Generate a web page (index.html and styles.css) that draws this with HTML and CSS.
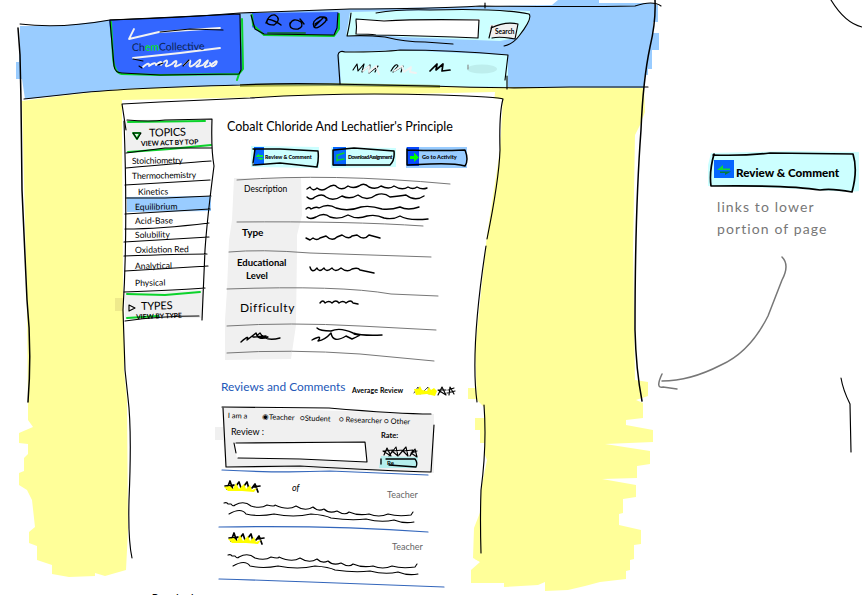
FILE: index.html
```html
<!DOCTYPE html>
<html lang="en">
<head>
<meta charset="utf-8">
<title>ChemCollective</title>
<link rel="stylesheet" href="styles.css">
</head>
<body>
<div class="sketch">
<svg class="ink" viewBox="0 0 862 595" aria-hidden="true">
  <!-- marker fills -->
  <path class="yellow" d="M22 101L60 96L120 89L250 85L644 87L645 112L640 125L635 135L633 250L635 380L648 382V396L636 400L643 403V418L626 420V425L653 430V442L605 444L650 451V464L637 466V478L602 479L636 485V497L623 499V513L619 514V525L641 530V544L634 545V559L630 560V570L626 571V579L600 582L585 586L568 590L545 591V582L538 585L504 587V583L471 583V570L480 562L473 558V540L476 510L480 494L487 460L480 443V430L475 428V418L477 402L468 399V388L472 386V370L475 350L495 92L122 100L124 310V370L127 400L128 530L126 570L119 572L105 576L95 573V576L69 577L52 574V565L37 560V546L29 543V532L35 527L32 500L27 490L19 485V473L24 471V458L28 454V444L19 443V433L33 427L28 420V408L27 300Z"/>
  <path class="sky" d="M20 26L60 26L110 20L240 13L345 9L500 6L552 5L558 0H599V3H655V5H658V22H653V33H659V50H652V69H648V75H645L644 88L500 87L250 85L120 89L25 99L22 79H16V62H19Z"/>
  <path class="paper" d="M122 104L160 101L240 98L340 94L440 95L503 99L500 150L487 235L475 350L477 400L484 407L485 440L481 490L481 553L471 562V595H132L128 398L123 300Z"/>
  <path class="paper" d="M503 100L507 101L506 140L502 175L500 150Z"/>
  <path class="yellow" d="M503 99L520 99V200H494L500 150ZM468 388H476L477 399H468ZM475 418H485V430H475ZM480 430H485V443H480ZM474 528L481 510V562L473 558Z"/>
  <path class="royal" d="M109 20H117L240 14L243 70L238 75L150 75L119 73L114 65Z"/>
  <path class="royal" d="M252 13L338 12L338 29L333 35L262 34L252 27Z"/>
  <path class="cyan" d="M350 12L480 9L530 11L530 20L519 37L500 41L400 37L346 36Z"/>
  <path class="sky" d="M347 37L380 35L410 38L480 41L480 45L347 44Z"/>
  <path class="cyan" d="M339 52L400 50L508 55V87L341 84Z"/>
  <path class="paper" d="M356 20L480 19L478 38L356 34Z"/>
  <path class="grey" d="M490 25L518 23L517 38L489 37Z"/>
  <path class="grey" d="M126 120L212 119V148L126 152Z"/>
  <path class="grey" d="M125 293L203 290V318L125 319Z"/>
  <path fill="#eeea8c" d="M115 298H123V311H115Z"/>
  <path class="sky" d="M127 197L211 196V211L127 212Z"/>
  <path class="grey" d="M234 178H301L302 215L297 235V250L296 325L291 359L225 360V320L227 290L229 240L232 220Z"/>
  <path class="grey" d="M223 407L434 414V473L226 467L223 440H215V427H223Z"/>
  <path class="paper" d="M234 443L365 443L367 462L237 458Z"/>
  <path fill="#b5efed" d="M381 456L418 457L417 468H379Z"/>
  <path class="cyan" d="M251 146L319 147V168L251 167ZM331 147L396 148V167L331 168Z"/>
  <path fill="#99ccff" d="M406 147H467V168H406Z"/>
  <path class="cyan" d="M711 153L790 151L859 152V191L851 192L779 188L708 186V165Z"/>
  <path fill="#0666ff" d="M254 147H264V165H254ZM333 147H346V166H333Z"/>
  <path fill="#0849ff" d="M407 147H419V166H407Z"/>
  <path fill="#0666ff" d="M714 160H734V178H714Z"/>
  <ellipse cx="482" cy="69" rx="15" ry="4.5" fill="#bdeeed"/>
  <path fill="#737a0a" opacity=".6" d="M240 84L330 83L440 85L440 88L330 86L240 87Z"/>

  <!-- green accents -->
  <g class="green">
    <path d="M111 22L113 57Q114 73 122 74L160 75L239 74L243 69L242 19M239 74L237 80"/>
    <path d="M252 15L253 25L264 35L334 36L339 29L339 14"/>
    <path d="M128 122L205 121M128 152L170 149L211 145M127 294L165 295L200 292M127 318L158 316"/>
    <path d="M268 33L305 33" stroke="#186b51"/>
    <path d="M133 133L140 133L137 139Z"/>
    <path d="M338 155L344 153M338 160L344 159M337 155V161" stroke-width="1.4"/>
  </g>
  <path fill="#0f0" d="M410 156H414V152.500L419 157.500L414 162V159H410Z"/>
  <path fill="#0be63b" d="M256 156L259 153.500V155H263V157H256ZM257 158H264L261 160Z"/>
  <path fill="#12d936" d="M717 170L723 165V168.500H730V170Z"/>
  <path fill="#077b3c" d="M720 171.500H731L725 175V173H720Z"/>

  <!-- outlines -->
  <g class="pen">
    <path d="M20 24Q60 29 110 20Q180 18 240 13Q300 11 350 9Q430 9 480 6Q580 7 635 6Q653 0 661 6M485 3V8"/>
    <path d="M18 28L20 55L21 101L22 190L27 300Q32 350 28 402" stroke-width="1.5"/>
    <path d="M655 0Q656 22 650 47Q643 80 641 130Q635 210 635 330Q636 370 642 401" stroke-width="1.5"/>
    <path d="M24 99L70 94Q120 88 240 85Q280 83 330 84L430 86Q500 89 570 87L648 87"/>
    <path d="M126 130L122 104L160 102L250 98Q340 92 440 95Q500 97 503 99Q499 113 500 150Q499 180 487 239M486 246Q470 350 477 402M484 405Q487 445 481 490Q480 520 481 553"/>
    <path d="M124 121Q128 230 123 310L125 370L128 398Q132 430 129 500Q128 540 132 558"/>
    <path d="M110 21L114 66Q115 73 122 73L160 75L239 74L241 70L240 14L110 20"/>
    <path d="M251 15L255 29L264 34L334 35L337 28L338 13M376 13Q400 9 430 10Q500 8 529 14Q533 18 519 36Q513 44 504 46M351 13Q350 23 347 36Q366 35 385 37Q405 42 425 42L453 44"/>
    <path d="M356 20Q357 27 356 34Q370 34 376 35Q430 36 478 38L479 20Q418 19 384 21L356 19"/>
    <path d="M492 26L489 38M491 28Q506 21 518 24L515 39Q500 36 492 38"/>
    <path d="M340 84L338 55Q339 50 345 52Q385 52 400 50Q450 50 508 55L505 80M507 76V89"/>
    <path d="M127 120Q150 122 165 120L212 119Q211 150 214 166Q207 220 205 250L202 320M126 153L165 148L212 148M126 168Q180 163 211 161M125 185L210 180M126 198L165 198L211 196M125 214L210 209M125 229Q160 229 209 223M124 242L209 237M124 256Q180 254 207 254M125 271L208 266M124 292Q180 290 205 288M124 303M125 321Q160 316 199 316"/>
    <path d="M133 133L141 133L137 139ZM129 305V311L135 308Z"/>
    <path d="M255 149L253 163M253 149L280 149L318 151Q319 159 317 167L280 163L253 165M333 150L333 165L390 165Q395 160 394 151L354 148L334 150M407 149V165L430 164Q454 163 465 166Q469 160 465 150Q440 151 407 150" stroke-width="1.5"/>
    <path d="M713 155Q744 156 770 153L853 154Q858 170 852 192Q831 188 820 190Q790 185 711 186Q709 172 714 154" stroke-width="1.7"/>
    <path d="M222 407L329 408Q400 414 431 414M223 408L226 467L300 466Q390 471 431 472L434 425M234 443L236 453M236 443L365 442L367 462L300 459L238 458"/>
    <path d="M381 459V464M386 459L415 459Q418 463 416 467L389 465" stroke-width="1.3"/>
    <path d="M831 0Q845 23 862 27M841 378Q843 390 850 404L851 452"/>
  </g>
  <g class="rule">
    <path d="M237 180Q330 173 450 184M237 222Q350 221 423 226M229 252Q260 249 310 253L431 257M227 289Q340 285 391 294L438 296M227 326Q290 322 360 326L436 330M227 353Q290 349 360 354L434 361"/>
    <path d="M782 257Q790 265 782 280Q773 303 768 316Q750 352 721 365Q690 381 662 381M662 374Q655 389 663 387L677 389" stroke-width="1.5"/>
  </g>
  <path class="blue" d="M222 470Q280 473 330 471L428 475M219 527Q330 525 428 532M219 579Q260 580 310 582L444 587"/>

  <!-- masthead squiggles -->
  <g class="chalk">
    <path d="M134 29L129 39L159 32L220 28M133 58L180 53L220 48"/>
    <path d="M143 67Q150 61 149 66Q156 61 156 65Q163 59 161 65Q168 57 167 63Q163 69 172 64Q178 58 176 64Q172 69 181 64M184 65Q192 57 190 63Q188 70 196 63Q203 56 199 64Q192 69 203 65Q210 57 207 63Q201 70 211 65Q219 58 216 64Q211 69 210 63"/>
  </g>
  <g class="pen">
    <path d="M160 32L190 29L223 30M133 59L143 61M139 66L142 68M158 65L163 63M183 66L189 60"/>
    <path d="M266 23Q269 14 275 15Q282 19 274 25Q264 25 268 19Q276 21 281 25M290 24Q293 17 301 22Q304 27 298 29Q289 30 290 23M300 19L304 24M314 27Q311 21 320 17Q330 16 325 22Q317 30 314 27L324 17L327 20M315 24L321 20" stroke-width="1.4"/>
    <path d="M353 70L357 64L358 71L364 64L362 72L370 65L369 73L378 66L375 72M391 71Q396 62 398 66L393 72L403 66L401 72"/>
    <path d="M430 71L437 64L436 70L443 64L442 71L450 70" stroke-width="1.7"/>
    <path d="M468 65V69" stroke="#888"/>
  </g>
  <path class="chalk" d="M363 71L369 66L369 72L376 66L379 74M394 71L402 66L404 72L411 67L410 72L416 73"/>

  <!-- placeholder lines -->
  <g class="wave">
    <path d="M307 189l3-2q3 5 7 1q5 4 10 0q7-5 10-1q5 4 11-1q5 3 11 0q5-4 10 1q7 3 12-1q8 4 13 0q8 5 14 1q5 3 9 0q5 3 10 1"/>
    <path d="M307 197q4 4 8 0q7-4 11 0q7 5 16-1q8 4 16-1q9 7 18 0q8-3 14 2q10-1 16-2q9 7 18 1"/>
    <path d="M306 209q3-3 5 0q5-3 8-1q9-5 17 0q12 4 25-1q9-2 21 2q9 1 18-2q8 4 19 0"/>
    <path d="M307 217q3 3 9 0q8-5 14 0q9 3 18-2q9 5 19 1q9-2 17 2q9 2 16-2q8 5 28 3"/>
    <path d="M306 238l4 2l3-2q4 3 7 0l6-2q6 6 11 1l5-2q7 5 10 1l5-1q7 6 12 0l11 3"/>
    <path d="M310 267q2 7 7 1q2 5 7 0q2 5 8 0q3 5 9 0q6 5 11 1q6-2 8 1l14 3"/>
    <path d="M320 303q3-4 5 0q4-3 7 0q4-4 7 0q4-3 7 0q5-4 7 0l5 1"/>
    <path d="M241 342Q250 334 247 340L256 333Q258 341 268 337Q252 339 260 333Q265 342 280 338M253 337L266 336"/>
    <path d="M317 328Q320 331 331 331Q340 327 353 333Q362 336 382 335M312 340Q323 334 318 341Q325 340 331 333Q333 344 346 336L352 339Q361 335 359 335L354 334"/>
  </g>
  <g class="wave thin">
    <path d="M224 503q3-1 4 1l3 0q2 3 4 1q9-5 16 1q10 3 16-1q8 2 8 0q13 6 21 1q9 6 17 1q5 5 11 2q5 5 13 2q8 5 12 1q9 4 20 2q10 4 19 0q10 3 23 1l2-3M229 514q12-7 17 0q13 3 28 0q20 4 37 0q14 1 20 4q20 3 35 1q15 4 28 1q10 4 20 2"/>
    <path d="M228 555q3-1 4 1l3 0q2 3 4 1q9-5 16 1q10 3 16-1q8 2 8 0q13 6 21 1q9 6 17 1q5 5 11 2q5 5 13 2q8 5 12 1q9 4 20 2q10 4 19 0q10 3 23 1l2-3M233 566q12-7 17 0q13 3 28 0q20 4 37 0q14 1 20 4q20 3 35 1q15 4 28 1q10 4 20 2"/>
  </g>

  <!-- rating stars -->
  <g class="pen">
    <path d="M414 393L418 387L420 394M424 391L428 387L429 394" stroke-width=".7"/>
    <path d="M438 395L442 387L446 395L438 390L446 390M448 390L454 388M449 395L450 387L454 394M447 393L455 391"/>
    <path d="M384 455L387 448L391 456L383 451L393 450L389 456L396 447L398 456L392 451L403 450L399 455L406 447L408 456L403 451L413 450L410 456L415 449L417 457L411 453L417 451"/>
    <path d="M225 486L234 485L227 489L230 481L233 490M236 486L239 482L241 488M244 486L247 482L249 489M252 488L255 484L258 492M253 487L260 486" stroke-width="1.7"/>
    <path d="M229 538L238 537L231 541L234 533L237 542M240 538L243 534L245 540M248 538L251 534L253 541M256 540L259 536L262 544M257 539L264 538" stroke-width="1.7"/>
  </g>
  <path class="star-fill" d="M414 389L418 389L420 386L422 390L427 391L429 387L431 390L434 388L437 391L435 396L427 394L416 395ZM224 487L230 486L233 489L236 483L239 489L244 484L246 489L250 485L252 490L257 488L254 492L242 491L228 491ZM228 539L234 538L237 541L240 535L243 541L248 536L250 541L254 537L256 542L261 540L258 544L246 543L232 543Z"/>
</svg>

<div class="layout">
  <div class="screen">
    <header class="masthead">
      <div class="brand">Ch<span class="lit">em</span>Collective</div>
      <div class="search">Search</div>
    </header>
    <div class="body">
      <nav class="topics">
        <h2>TOPICS</h2>
        <p class="hint">VIEW ACT BY TOP</p>
        <ul>
          <li>Stoichiometry</li>
          <li>Thermochemistry</li>
          <li class="in">Kinetics</li>
          <li>Equilibrium</li>
          <li>Acid-Base</li>
          <li>Solubility</li>
          <li>Oxidation Red</li>
          <li>Analytical</li>
          <li>Physical</li>
        </ul>
        <h2 class="types">TYPES</h2>
        <p class="hint low">VIEW BY TYPE</p>
      </nav>
      <main>
        <h1>Cobalt Chloride And Lechatlier's Principle</h1>
        <div class="actions">
          <span class="review">Review &amp; Comment</span>
          <span class="download">Download Assignment</span>
          <span class="go">Go to Activity</span>
        </div>
        <div class="facts">
          <div class="desc">Description</div>
          <div class="type">Type</div>
          <div class="level">Educational<br><span>Level</span></div>
          <div class="diff">Difficulty</div>
        </div>
        <div class="reviews-head"><h3>Reviews and Comments</h3><span>Average Review</span></div>
        <div class="form">
          <div class="roles"><span>I am a</span><span class="r1">◉Teacher</span><span class="r2">○Student</span><span class="r3">○ Researcher</span><span class="r4">○ Other</span></div>
          <div class="form-row"><span>Review :</span><span class="rate">Rate:</span></div>
          <div class="submit">Re</div>
        </div>
        <div class="comment"><span>of</span><span class="who">Teacher</span></div>
        <div class="comment second"><span class="who">Teacher</span></div>
      </main>
    </div>
    <div class="cutoff">Download</div>
  </div>
  <aside class="note">
    <div class="callout">Review &amp; Comment</div>
    <p>links to lower</p>
    <p class="p2">portion of page</p>
  </aside>
</div>
</div>
</body>
</html>
```

FILE: styles.css
```css
* { box-sizing: border-box; }
body { margin: 0; background: #fff; }
h1, h2, h3, p, ul { margin: 0; padding: 0; font-weight: normal; }
ul { list-style: none; }
.sketch {
  position: relative;
  width: 862px;
  height: 595px;
  overflow: hidden;
  background: #fff;
  color: #000;
  font-family: Lato, "Open Sans", sans-serif;
}
.ink { position: absolute; inset: 0; width: 862px; height: 595px; }

.yellow { fill: #ffff99; }
.sky { fill: #99ccff; }
.paper { fill: #fff; }
.royal { fill: #3366ff; }
.cyan { fill: #ccffff; }
.grey { fill: #f0f0f0; }
.star-fill { fill: #ffff00; }
.pen, .rule, .green, .chalk, .wave, .blue {
  fill: none;
  stroke-linecap: round;
  stroke-linejoin: round;
}
.pen { stroke: #000; stroke-width: 1.15; }
.rule { stroke: #777; stroke-width: 1; }
.green { stroke: #0bd32b; stroke-width: 2; }
.chalk { stroke: #f2f2f2; stroke-width: 1.8; }
.wave { stroke: #000; stroke-width: 1.4; }
.thin { stroke-width: 1.1; }
.blue { stroke: #3366bb; stroke-width: 1.2; }

.layout { position: relative; display: grid; grid-template-columns: 660px 202px; height: 595px; }
.screen { display: flex; flex-direction: column; white-space: nowrap; }
.masthead { display: flex; height: 95px; padding-left: 132px; }
.brand { width: 363px; padding-top: 41px; font-size: 10.5px; line-height: 12px; color: #0b2352; transform-origin: 0 50px; transform: rotate(-1deg); }
.lit { color: #00f000; }
.search { padding-top: 26px; font-size: 6.5px; font-weight: bold; line-height: 11px; }

.body { display: flex; height: 492px; padding-left: 125px; }
.topics { width: 95px; padding-top: 31px; }
.topics h2 { height: 12px; padding-left: 24px; font-size: 11px; line-height: 12px; letter-spacing: -.2px; transform: rotate(-2deg); }
.hint { height: 8px; padding-left: 16px; font-size: 6.8px; font-weight: bold; line-height: 8px; transform: rotate(-2deg); }
.topics ul { display: grid; grid-template-rows: 15px 16px 15px 15px 14px 14px 15px 17px 17px; padding: 7px 0 8px 10px; align-items: center; font-size: 8.6px; line-height: 10px; }
.topics li { transform: rotate(-1deg); transform-origin: 0 50%; }
.topics li:nth-child(-n+2) { margin-left: -3px; letter-spacing: -.15px; }
.topics .in { padding-left: 3px; }
.topics .types { padding-left: 16px; }
.topics .low { padding-left: 11px; }

main { flex: 1; padding-top: 23px; }
h1 { height: 17px; padding-left: 7px; font-size: 12.5px; line-height: 17px; }
.actions { display: flex; height: 43px; padding: 18px 0 0 45px; font-size: 5.3px; font-weight: 900; line-height: 8px; }
.actions .review { width: 83px; }
.actions .download { width: 74px; letter-spacing: -.5px; }
.actions .go { font-size: 5.6px; }
.facts { display: grid; grid-template-rows: 44px 30px 37px 37px; height: 193px; padding-left: 20px; font-size: 10px; line-height: 13px; }
.desc { padding: 5px 0 0 4px; font-size: 8.5px; }
.type { padding: 4px 0 0 2px; font-weight: bold; }
.level { margin-left: -3px; padding-top: 4px; font-size: 9.5px; font-weight: bold; }
.level span { padding-left: 9px; }
.diff { padding-top: 12px; font-size: 12px; letter-spacing: .6px; }
.reviews-head { display: flex; align-items: center; height: 37px; padding: 0 0 5px 1px; }
.reviews-head h3 { width: 131px; font-size: 11.9px; line-height: 16px; color: #2358b8; }
.reviews-head span { padding-top: 6px; font-size: 7px; font-weight: bold; line-height: 10px; letter-spacing: .1px; }
.form { height: 63px; padding: 3px 0 0 8px; font-size: 8px; }
.roles { display: flex; height: 16px; line-height: 10px; transform: rotate(2deg); transform-origin: 0 0; font-size: 7.5px; }
.roles span { flex: none; }
.roles span:first-child { width: 34px; }
.r1 { width: 38px; }
.r2 { width: 39px; }
.r3 { width: 45px; }
.form-row { display: flex; height: 22px; padding-left: 3px; font-size: 9px; line-height: 10px; }
.form-row span { width: 150px; }
.form-row .rate { padding-top: 4px; font-size: 7.5px; font-weight: bold; }
.submit { padding: 10px 0 0 159px; font-size: 6px; font-weight: bold; line-height: 8px; }
.comment { display: flex; height: 52px; padding: 11px 0 0 72px; font-size: 9px; font-style: italic; line-height: 11px; }
.comment span { width: 95px; }
.comment .who { padding-top: 7px; font-style: normal; color: #666; }
.comment.second { padding-left: 172px; }
.cutoff { padding: 5px 0 0 152px; font-size: 9px; line-height: 11px; font-weight: bold; }

.note { padding: 163px 0 0 57px; color: #777; font-size: 14px; white-space: nowrap; }
.callout { height: 18px; padding-left: 19px; color: #000; font-size: 11.7px; font-weight: 900; line-height: 18px; }
.note p { height: 37px; padding-top: 17px; line-height: 18px; letter-spacing: 1.1px; }
.note .p2 { padding-top: 2px; }
```
